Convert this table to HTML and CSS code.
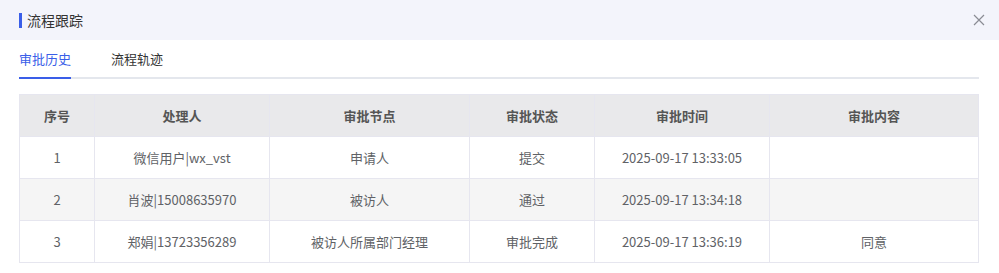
FILE: index.html
```html
<!DOCTYPE html>
<html lang="zh">
<head>
<meta charset="utf-8">
<link rel="stylesheet" href="styles.css">
</head>
<body>
<div class="dialog">
  <div class="header">
    <div class="title"><span class="bar"></span>流程跟踪</div>
    <svg class="close" width="12" height="12" viewBox="0 0 12 12"><path d="M1 1L11 11M11 1L1 11" stroke="#8a8c94" stroke-width="1.2" fill="none"/></svg>
  </div>
  <div class="body">
    <div class="tabs">
      <div class="tab active">审批历史</div>
      <div class="tab">流程轨迹</div>
    </div>
    <table class="grid">
      <colgroup>
        <col style="width:75px"><col style="width:175px"><col style="width:200px"><col style="width:125px"><col style="width:175px"><col>
      </colgroup>
      <thead>
        <tr><th>序号</th><th>处理人</th><th>审批节点</th><th>审批状态</th><th>审批时间</th><th>审批内容</th></tr>
      </thead>
      <tbody>
        <tr><td>1</td><td>微信用户|wx_vst</td><td>申请人</td><td>提交</td><td>2025-09-17 13:33:05</td><td></td></tr>
        <tr class="striped"><td>2</td><td>肖波|15008635970</td><td>被访人</td><td>通过</td><td>2025-09-17 13:34:18</td><td></td></tr>
        <tr><td>3</td><td>郑娟|13723356289</td><td>被访人所属部门经理</td><td>审批完成</td><td>2025-09-17 13:36:19</td><td>同意</td></tr>
      </tbody>
    </table>
  </div>
</div>
</body>
</html>
```
FILE: styles.css
```css
* { box-sizing: border-box; }
html, body { margin: 0; padding: 0; background: #fff; }
body { font-family: "Noto Sans CJK SC", "Noto Sans", sans-serif; color: #333; }
.dialog { width: 999px; height: 273px; }
.header {
  height: 40px;
  background: #f3f4fb;
  display: flex;
  align-items: center;
  justify-content: space-between;
  padding: 0 14px 0 19px;
}
.title { display: flex; align-items: center; font-size: 14px; color: #333; }
.bar { display: inline-block; width: 3px; height: 15px; background: #3a5ee8; margin-right: 5px; }
.close { display: block; margin-top: -1px; }
.body { padding: 0 20px 0 19px; }
.tabs {
  display: flex;
  gap: 40px;
  height: 39px;
  border-bottom: 2px solid #e4e7ed;
  margin-bottom: 15px;
}
.tab { font-size: 13px; line-height: 38px; color: #333; position: relative; }
.tab.active { color: #3a5ee8; }
.tab.active::after {
  content: "";
  position: absolute;
  left: 0; right: 0; bottom: -2px;
  height: 2px;
  background: #3a5ee8;
}
.grid {
  width: 960px;
  border-collapse: collapse;
  table-layout: fixed;
  font-size: 13px;
}
.grid th, .grid td {
  height: 42px;
  border: 1px solid #e6e6ef;
  text-align: center;
  padding: 0;
  color: #606266;
}
.grid th { background: #e9e9eb; font-weight: bold; color: #555; }
.grid tr.striped td { background: #f5f5f5; }
```
